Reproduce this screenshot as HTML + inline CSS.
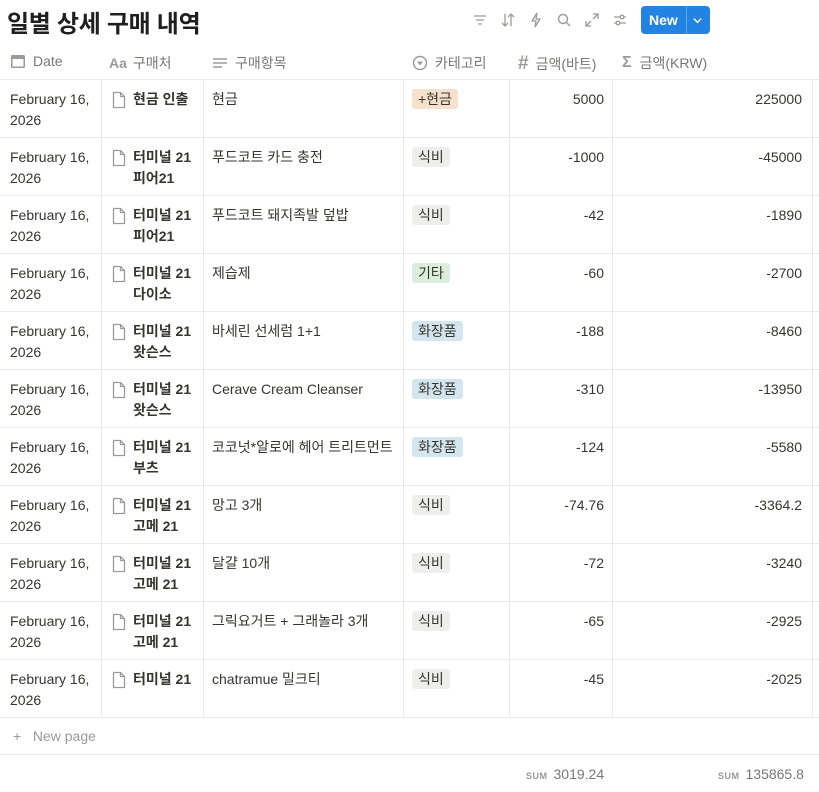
<!DOCTYPE html>
<html><head><meta charset="utf-8"><style>
*{margin:0;padding:0;box-sizing:border-box}
body{width:819px;height:792px;overflow:hidden;background:#fff;font-family:"Liberation Sans","Noto Sans CJK KR",sans-serif;color:#37352f;font-size:14px;position:relative}
h1{position:absolute;left:7px;top:4px;font-size:24px;font-weight:700;color:#1f1f1f;letter-spacing:-0.3px}
.tools{position:absolute;top:6px;left:472px;height:28px;display:flex;align-items:center;gap:0}
.tools svg{width:16px;height:16px;margin-right:12px}
.new{position:absolute;left:641px;top:6px;width:69px;height:28px;background:#2383e2;border-radius:4px;color:#fff;font-weight:700;font-size:14px}
.new span{position:absolute;left:8px;top:6px}
.new i{position:absolute;left:45px;top:0;width:1px;height:28px;background:rgba(255,255,255,.3)}
.hdr{position:absolute;top:42px;height:38px;border-bottom:1px solid #e9e9e7;left:0;width:819px}
.h{position:absolute;top:11px;color:#787774;font-size:14px;display:flex;align-items:center}
.h svg{margin-right:7px}
.row{position:absolute;left:0;width:819px;height:58px;border-bottom:1px solid #e9e9e7}
.c{position:absolute;top:0;height:58px;border-right:1px solid #e9e9e7;padding:9px 8px;line-height:21px}
.c1{left:0;width:102px;padding-left:10px}
.c2{left:102px;width:102px;font-weight:700;padding-left:9px;display:flex}
.c2 svg{flex:none;margin-right:6px;margin-top:2px}
.c3{left:204px;width:200px}
.c4{left:404px;width:106px}
.c5{left:510px;width:103px;text-align:right}
.c6{left:613px;width:200px;text-align:right;padding-right:10px}
.tag{display:inline-block;padding:0 6px;border-radius:3px;line-height:20px;height:20px;font-size:14px}
.cash{background:#f7e0cc}.food{background:#eeeeec}.etc{background:#dbeddb}.cos{background:#d3e5ef}
.np{position:absolute;top:717px;left:0;width:819px;height:38px;border-bottom:1px solid #e9e9e7;color:#9b9a97;padding:11px 13px}
.sum{position:absolute;top:766px;color:#787774;font-size:14px}
.sum b{font-size:9px;letter-spacing:.5px;color:#9b9a97;margin-right:6px;font-weight:700}
</style></head><body>
<h1>일별 상세 구매 내역</h1>
<div class="tools">
<svg viewBox="0 0 16 16" stroke="#9b9a97" stroke-width="1.3" fill="none"><path d="M2 4h12M4 8h8M6 12h4"/></svg>
<svg viewBox="0 0 16 16" stroke="#9b9a97" stroke-width="1.3" fill="none"><path d="M5 2v12M2 11l3 3 3-3M11 14V2M8 5l3-3 3 3"/></svg>
<svg viewBox="0 0 16 16" stroke="#9b9a97" stroke-width="1.3" fill="none"><path d="M9 1L4 9h4l-1 6 5-8H8z"/></svg>
<svg viewBox="0 0 16 16" stroke="#9b9a97" stroke-width="1.4" fill="none"><circle cx="7" cy="7" r="4.5"/><path d="M10.5 10.5L14 14"/></svg>
<svg viewBox="0 0 16 16" stroke="#9b9a97" stroke-width="1.3" fill="none"><path d="M9 2h5v5M14 2L9 7M7 14H2V9M2 14l5-5"/></svg>
<svg viewBox="0 0 16 16" stroke="#9b9a97" stroke-width="1.3" fill="none"><path d="M2 5h12M2 11h12"/><circle cx="10" cy="5" r="1.8" fill="#fff"/><circle cx="6" cy="11" r="1.8" fill="#fff"/></svg>
</div>
<div class="new"><span>New</span><i></i><svg style="position:absolute;left:51px;top:9px" width="11" height="11" viewBox="0 0 12 12" stroke="#fff" stroke-width="1.6" fill="none"><path d="M2 4l4 4 4-4"/></svg></div>
<div class="hdr">
<div class="h" style="left:10px"><svg width="16" height="16" viewBox="0 0 16 16"><rect x="1" y="2" width="14" height="13" rx="1.5" fill="#9b9a97"/><rect x="2.5" y="6" width="11" height="7.5" fill="#fff"/></svg>Date</div>
<div class="h" style="left:109px"><span style="font-weight:700;color:#9b9a97;margin-right:6px;font-size:14px">Aa</span>구매처</div>
<div class="h" style="left:212px"><svg width="16" height="16" viewBox="0 0 16 16" stroke="#9b9a97" stroke-width="1.5"><path d="M1 4h14M1 8h14M1 12h9"/></svg>구매항목</div>
<div class="h" style="left:412px"><svg width="16" height="16" viewBox="0 0 16 16"><circle cx="8" cy="8" r="6.5" stroke="#9b9a97" stroke-width="1.4" fill="none"/><path d="M5 6.5h6L8 10.5z" fill="#9b9a97"/></svg>카테고리</div>
<div class="h" style="left:518px"><span style="font-size:19px;color:#9b9a97;margin-right:7px;font-weight:700">#</span>금액(바트)</div>
<div class="h" style="left:622px"><span style="font-size:16px;color:#9b9a97;margin-right:8px;font-weight:700">Σ</span>금액(KRW)</div>
</div>
<div id="rows"></div>
<div class="np">+&nbsp;&nbsp;&nbsp;New page</div>
<div class="sum" style="left:526px"><b>SUM</b>3019.24</div>
<div class="sum" style="left:718px"><b>SUM</b>135865.8</div>
<script>
var d=[["현금 인출","현금","+현금","cash","5000","225000"],
["터미널 21 피어21","푸드코트 카드 충전","식비","food","-1000","-45000"],
["터미널 21 피어21","푸드코트 돼지족발 덮밥","식비","food","-42","-1890"],
["터미널 21 다이소","제습제","기타","etc","-60","-2700"],
["터미널 21 왓슨스","바세린 선세럼 1+1","화장품","cos","-188","-8460"],
["터미널 21 왓슨스","Cerave Cream Cleanser","화장품","cos","-310","-13950"],
["터미널 21 부츠","코코넛*알로에 헤어 트리트먼트","화장품","cos","-124","-5580"],
["터미널 21 고메 21","망고 3개","식비","food","-74.76","-3364.2"],
["터미널 21 고메 21","달걀 10개","식비","food","-72","-3240"],
["터미널 21 고메 21","그릭요거트 + 그래놀라 3개","식비","food","-65","-2925"],
["터미널 21","chatramue 밀크티","식비","food","-45","-2025"]];
var ic='<svg width="16" height="18" viewBox="0 0 16 18" fill="none" stroke="#9b9a97" stroke-width="1.3"><path d="M2.5 1.5h7l4 4v11h-11z"/><path d="M9.5 1.5v4h4"/></svg>';
var h='';d.forEach(function(r,i){h+='<div class="row" style="top:'+(80+i*58)+'px"><div class="c c1">February 16, 2026</div><div class="c c2">'+ic+'<span>'+r[0]+'</span></div><div class="c c3">'+r[1]+'</div><div class="c c4"><span class="tag '+r[3]+'">'+r[2]+'</span></div><div class="c c5">'+r[4]+'</div><div class="c c6">'+r[5]+'</div></div>'});
document.getElementById('rows').innerHTML=h;
</script>
</body></html>
